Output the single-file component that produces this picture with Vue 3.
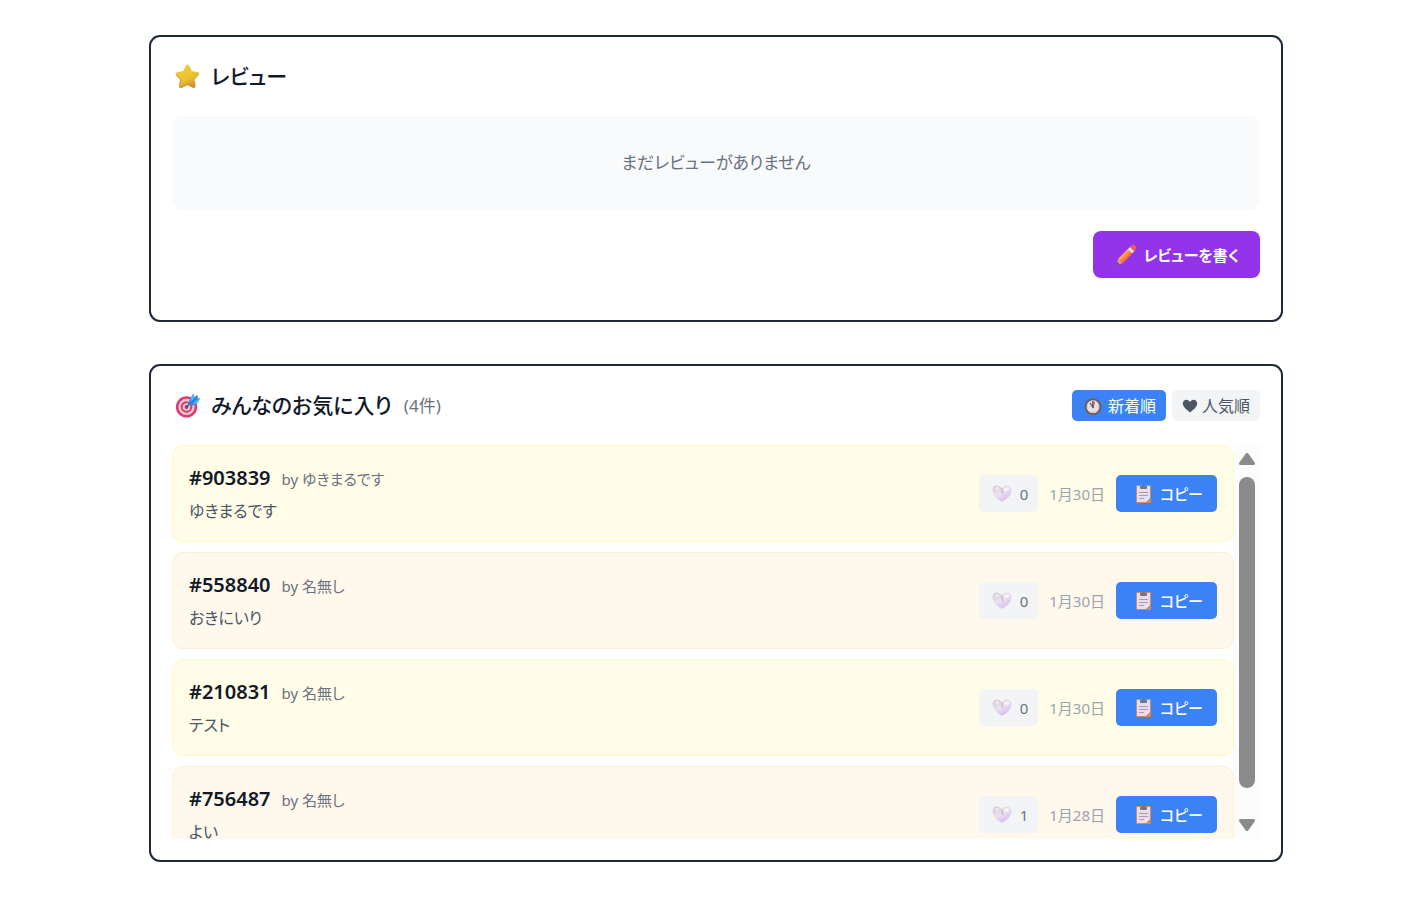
<template>
  <main class="page">
    <!-- Reviews -->
    <section class="card">
      <div class="card__header">
        <h2 class="card__title">
          <svg class="icon icon--title" viewBox="0 0 32 32" aria-hidden="true">
            <defs>
              <linearGradient id="starFill" x1="0" y1="0" x2="0.6" y2="1">
                <stop offset="0" stop-color="#f3cf3a" />
                <stop offset="0.7" stop-color="#e9c030" />
                <stop offset="1" stop-color="#d8962d" />
              </linearGradient>
            </defs>
            <path
              d="M16 5.4 19.4 12 26.6 13.2 21.5 18.5 22.7 26 16 22.7 9.3 26 10.5 18.5 5.4 13.2 12.6 12Z"
              fill="url(#starFill)"
              stroke="url(#starFill)"
              stroke-width="3.4"
              stroke-linejoin="round"
            />
            <path d="M4.4 14.5 8.8 19 7.8 27" fill="none" stroke="#c98a2c" stroke-linecap="round" />
            <path d="M9.2 27.5 16 24.3 22.8 27.6" fill="none" stroke="#c98a2c" stroke-linecap="round" />
          </svg>
          <span>レビュー</span>
        </h2>
      </div>
      <p class="empty">まだレビューがありません</p>
      <div class="card__actions">
        <button type="button" class="btn btn--review">
          <svg class="icon icon--pencil" viewBox="0 0 25 25" aria-hidden="true">
            <path d="M16 5 18 3Q19.2 2 20.4 3.2L22 4.8Q23 6 22 7.200L20.3 9.200Z" fill="#f65a45" />
            <path d="M13.7 7.300 16 5 20.3 9.200 18 11.600Z" fill="#e9dbe6" />
            <path d="M13.7 7.300 18 11.600 8.400 21.200 4.100 16.900Z" fill="#f98a3e" />
            <path d="M13.7 7.300 15.200 8.800 5.600 18.400 4.100 16.900Z" fill="#fca65a" />
            <path d="M16.600 10.200 18 11.600 8.400 21.200 7 19.800Z" fill="#f26f3e" />
            <path d="M4.100 16.900 8.400 21.200 3.700 22.600Q2.700 22.800 2.900 21.800Z" fill="#d8a184" />
            <path d="M3.400 19.800 5.600 22 3.700 22.600Q2.700 22.800 2.900 21.800Z" fill="#6b5566" />
          </svg>
          <span>レビューを書く</span>
        </button>
      </div>
    </section>

    <!-- Favorites -->
    <section class="card">
      <div class="card__header">
        <h2 class="card__title">
          <svg class="icon icon--title" viewBox="0 0 32 32" aria-hidden="true">
            <circle cx="15" cy="17.5" r="11" fill="#e33b68" />
            <circle cx="15" cy="17.5" r="8.4" fill="#dccbdc" />
            <circle cx="15" cy="17.5" r="6" fill="#e33b68" />
            <circle cx="15" cy="17.5" r="3.9" fill="#dccbdc" />
            <circle cx="15" cy="17.5" r="2" fill="#cf2f5d" />
            <path d="M15 17.5 20 12.5" stroke="#3b5b8c" stroke-width="1.5" />
            <path d="M17 14.5 18 10 22 3.8 23.5 7.5 26 5 26 8.5 29 8.5 26.5 13 22 16 18.5 15.5Z" fill="#2f8fe8" />
            <path d="M19 8.7 22.2 3.8 23.4 8 20 12.5ZM24.5 10.5 29 8.7 26 13.5 21.5 15Z" fill="#4fb4f4" />
            <path d="M18 15 26.5 6.5" stroke="#2478d8" stroke-width="1.3" />
          </svg>
          <span>みんなのお気に入り</span>
          <span class="card__count">({{ favorites.length }}件)</span>
        </h2>
        <div class="sort">
          <button
            type="button"
            class="sort__btn"
            :class="{ 'sort__btn--active': sortKey === 'new' }"
            @click="sortKey = 'new'"
          >
            <svg class="icon icon--clock" viewBox="0 0 32 32" aria-hidden="true">
              <circle cx="16" cy="17" r="11" fill="#e6dfe6" stroke="#69646c" stroke-width="3.4" />
              <path d="M16 8.5V10M16 24V25.5M7.5 17H9M23 17H24.5" stroke="#a59ea8" stroke-width="1.4" />
              <path d="M16 18 12 12" stroke="#5a515d" stroke-width="1.8" stroke-linecap="round" />
              <path d="M16 18V9.5" stroke="#3d3540" stroke-width="1.8" stroke-linecap="round" />
              <path d="M15.5 18.5 18 11" stroke="#e0355f" stroke-width="1.6" stroke-linecap="round" />
            </svg>
            <span>新着順</span>
          </button>
          <button
            type="button"
            class="sort__btn"
            :class="{ 'sort__btn--active': sortKey === 'popular' }"
            @click="sortKey = 'popular'"
          >
            <svg class="icon icon--heart" viewBox="0 0 16 16" aria-hidden="true">
              <path
                d="M8 14.5C5.2 12 .8 9.3 .8 5.6 .8 3.2 2.5 1.8 4.5 1.8 6.1 1.8 7.4 2.7 8 4.2 8.6 2.7 9.9 1.8 11.5 1.8 13.5 1.8 15.2 3.2 15.2 5.6 15.2 9.3 10.8 12 8 14.5Z"
                fill="currentColor"
              />
            </svg>
            <span>人気順</span>
          </button>
        </div>
      </div>

      <div class="scroller">
        <ul ref="list" class="list" @scroll="updateThumb">
          <li
            v-for="(item, index) in sortedFavorites"
            :key="item.code"
            class="item"
            :class="index % 2 === 0 ? 'item--yellow' : 'item--orange'"
          >
            <div class="item__info">
              <div class="item__head">
                <span class="item__code">#{{ item.code }}</span>
                <span class="item__author">by {{ item.author }}</span>
              </div>
              <p class="item__comment">{{ item.comment }}</p>
            </div>
            <div class="item__side">
              <button type="button" class="like" aria-label="いいね" @click="item.likes++">
                <svg class="icon icon--like" viewBox="0 0 26 26" aria-hidden="true">
                  <defs>
                    <linearGradient :id="`like${item.code}`" x1="0" y1="0.1" x2="0.6" y2="1">
                      <stop offset="0" stop-color="#d6cad9" />
                      <stop offset="0.5" stop-color="#eae1ee" />
                      <stop offset="1" stop-color="#d9bdf0" />
                    </linearGradient>
                  </defs>
                  <path
                    d="M13 7.5C14.5 5.200 16.5 4.300 18.7 4.600 21.3 5 22.8 7 22.5 9.900 22 14.300 17.3 18.400 14.2 20.300Q13 21 11.8 20.300C8.7 18.400 4.200 14.300 3.600 9.900 3.200 7 4.700 5 7.300 4.600 9.500 4.300 11.5 5.200 13 7.5Z"
                    :fill="`url(#like${item.code})`"
                  />
                  <path d="M13 7.5Q14.6 10.500 14 14Q11.600 11 12 6.500Z" fill="#c3b1cb" opacity="0.8" />
                  <ellipse cx="17.5" cy="8" rx="2.6" ry="1.8" fill="#fff" opacity="0.7" />
                  <ellipse cx="8" cy="7.500" rx="2" ry="1.400" fill="#fff" opacity="0.5" />
                </svg>
                <span>{{ item.likes }}</span>
              </button>
              <time class="item__date">{{ item.date }}</time>
              <button type="button" class="btn btn--copy" @click="copyCode(item.code)">
                <svg class="icon icon--copy" viewBox="0 0 26 26" aria-hidden="true">
                  <rect x="6" y="4" width="15" height="18" rx="1" fill="#cf8a66" />
                  <path d="M7 5H20V17L16 21H7Z" fill="#e9ddec" />
                  <path d="M20 17 16 21V18Q16 17 17 17Z" fill="#f4edf6" />
                  <path d="M20 17V21H16Z" fill="#e08a4a" />
                  <path d="M10 5H11.500Q11.500 3.500 13.500 3.500T15.500 5H17V7Q17 8 16 8H11Q10 8 10 7Z" fill="#7b737f" />
                  <path d="M9 11.5H18M9 14.5H18M9 17.5H14" stroke="#a99cb3" />
                </svg>
                <span>コピー</span>
              </button>
            </div>
          </li>
        </ul>
        <div class="bar">
          <button type="button" class="bar__arrow" aria-label="上へ" @click="scrollList(-40)">
            <svg viewBox="0 0 16 12" aria-hidden="true">
              <path d="M8 1.5 14.5 10.5H1.5Z" fill="#8b8b8b" stroke="#8b8b8b" stroke-width="3" stroke-linejoin="round" />
            </svg>
          </button>
          <div class="bar__track">
            <div class="bar__thumb" :style="{ height: thumb.size + '%', top: thumb.offset + '%' }"></div>
          </div>
          <button type="button" class="bar__arrow" aria-label="下へ" @click="scrollList(40)">
            <svg viewBox="0 0 16 12" aria-hidden="true">
              <path d="M8 10.5 14.5 1.5H1.5Z" fill="#8b8b8b" stroke="#8b8b8b" stroke-width="3" stroke-linejoin="round" />
            </svg>
          </button>
        </div>
      </div>
    </section>
  </main>
</template>

<script setup>
import { computed, onMounted, onUnmounted, reactive, ref } from "vue";

const favorites = ref([
  { code: "903839", author: "ゆきまるです", comment: "ゆきまるです", likes: 0, date: "1月30日" },
  { code: "558840", author: "名無し", comment: "おきにいり", likes: 0, date: "1月30日" },
  { code: "210831", author: "名無し", comment: "テスト", likes: 0, date: "1月30日" },
  { code: "756487", author: "名無し", comment: "よい", likes: 1, date: "1月28日" },
]);

const sortKey = ref("new");

const sortedFavorites = computed(() => {
  if (sortKey.value === "popular") {
    return [...favorites.value].sort((a, b) => b.likes - a.likes);
  }
  return favorites.value;
});

const copyCode = (code) => {
  navigator.clipboard?.writeText(code);
};

// Scrollbar
const list = ref(null);
const thumb = reactive({ size: 100, offset: 0 });

const updateThumb = () => {
  const { clientHeight, scrollHeight, scrollTop } = list.value;
  thumb.size = (clientHeight / scrollHeight) * 100;
  thumb.offset = (scrollTop / scrollHeight) * 100;
};

const scrollList = (distance) => {
  list.value.scrollBy({ top: distance, behavior: "smooth" });
};

onMounted(() => {
  updateThumb();
  window.addEventListener("resize", updateThumb);
});

onUnmounted(() => {
  window.removeEventListener("resize", updateThumb);
});
</script>

<style>
body {
  margin: 0;
  background-color: #fff;
}
</style>

<style scoped>
.page {
  display: flex;
  flex-direction: column;
  gap: 42px;
  padding: 35px 138px 35px 149px;
  font-family: "Noto Sans", "Noto Sans CJK JP", sans-serif;
  font-feature-settings: "palt";
  color: #111827;
}

button {
  font: inherit;
  font-feature-settings: inherit;
  border: none;
  cursor: pointer;
}

.icon {
  display: block;
  flex-shrink: 0;
}

/* Card */
.card {
  border: 2px solid #1f2937;
  border-radius: 11px;
  padding: 21px;
  background-color: #fff;
}

.card__header {
  display: flex;
  align-items: center;
  justify-content: space-between;
  height: 37px;
  margin-bottom: 21px;
}

.card__title {
  display: flex;
  align-items: center;
  gap: 8px;
  margin: 0;
  font-size: 21px;
  font-weight: 500;
  line-height: 35px;
}

.card__count {
  margin-left: 4px;
  font-size: 17px;
  font-weight: 400;
  color: #6b7280;
}

.card__actions {
  display: flex;
  justify-content: flex-end;
  margin: 21px 0;
}

.icon--title {
  width: 31px;
  height: 31px;
}

.empty {
  margin: 0;
  padding: 32px;
  border-radius: 11px;
  background-color: #f9fafc;
  color: #6b7280;
  font-size: 17px;
  line-height: 30px;
  text-align: center;
}

/* Buttons */
.btn {
  display: flex;
  align-items: center;
  gap: 4px;
  color: #fff;
  font-size: 15px;
  line-height: 22px;
}

.btn--review {
  height: 47px;
  padding: 0 21px;
  border-radius: 8px;
  background-color: #9333ea;
  font-weight: 700;
}

.btn--review:hover {
  background-color: #7e22ce;
}

.icon--pencil {
  width: 25px;
  height: 25px;
}

.btn--copy {
  height: 37px;
  padding: 0 14px;
  border-radius: 5px;
  background-color: #3b82f6;
  font-weight: 500;
}

.btn--copy:hover {
  background-color: #2563eb;
}

.icon--copy,
.icon--like {
  width: 26px;
  height: 26px;
}

/* Sort */
.sort {
  display: flex;
  gap: 6px;
}

.sort__btn {
  display: flex;
  align-items: center;
  gap: 4px;
  height: 31px;
  padding: 0 10px;
  border-radius: 5px;
  background-color: #f3f4f6;
  color: #4b5563;
  font-size: 16px;
  line-height: 24px;
}

.sort__btn--active {
  background-color: #3b82f6;
  color: #fff;
}

.icon--clock {
  width: 22px;
  height: 22px;
}

.icon--heart {
  width: 16px;
  height: 16px;
}

/* List */
.scroller {
  display: flex;
  height: 394px;
}

.list {
  flex: 1;
  display: flex;
  flex-direction: column;
  gap: 10px;
  margin: 0;
  padding: 0;
  list-style: none;
  overflow-y: auto;
  scrollbar-width: none;
}

.item {
  display: flex;
  align-items: center;
  justify-content: space-between;
  flex-shrink: 0;
  padding: 14px 16px;
  border: 1px solid;
  border-radius: 11px;
}

.item--yellow {
  background-color: #fffde7;
  border-color: #fef9c3;
}

.item--orange {
  background-color: #fff8ec;
  border-color: #ffedd5;
}

.item__head {
  display: flex;
  align-items: baseline;
  gap: 11px;
  height: 36px;
  line-height: 35px;
}

.item__code {
  font-size: 20px;
  font-weight: 600;
}

.item__author {
  font-size: 15px;
  color: #6b7280;
}

.item__comment {
  margin: 0;
  font-size: 16px;
  line-height: 31px;
  color: #4b5563;
}

.item__side {
  display: flex;
  align-items: center;
  gap: 11px;
}

.item__date {
  font-size: 15px;
  color: #9ca3af;
}

.like {
  display: flex;
  align-items: center;
  gap: 5px;
  height: 37px;
  padding: 0 10px;
  border-radius: 5px;
  background-color: #f3f4f6;
  color: #6b7280;
  font-size: 15px;
}

/* Scrollbar */
.bar {
  display: flex;
  flex-direction: column;
  align-items: center;
  width: 26px;
  background-color: #fcfcfc;
}

.bar__arrow {
  display: flex;
  align-items: center;
  justify-content: center;
  width: 26px;
  height: 32px;
  padding: 0 0 4px;
  background: transparent;
}

.bar__arrow:last-child {
  padding: 4px 0 0;
}

.bar__arrow svg {
  width: 16px;
  height: 12px;
}

.bar__track {
  position: relative;
  flex: 1;
  width: 16px;
}

.bar__thumb {
  position: absolute;
  left: 0;
  right: 0;
  border-radius: 8px;
  background-color: #8b8b8b;
}
</style>
